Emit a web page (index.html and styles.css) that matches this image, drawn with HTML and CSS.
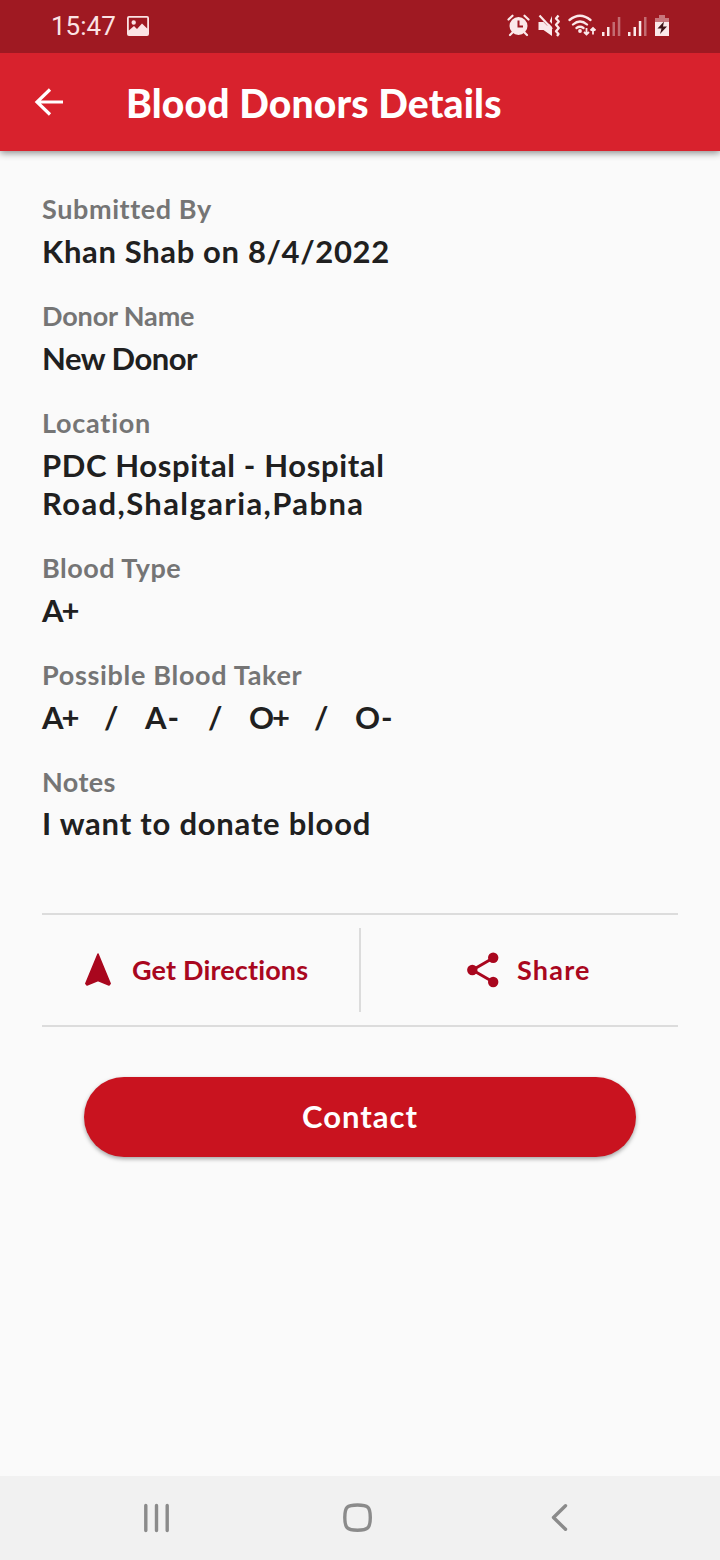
FILE: index.html
```html
<!DOCTYPE html>
<html lang="en">
<head>
<meta charset="utf-8">
<title>Blood Donors Details</title>
<link rel="stylesheet" href="styles.css">
</head>
<body>
<div class="screen">
  <div class="status">
    <span class="clock">15:47</span>
    <svg class="picture" width="22" height="20" viewBox="0 0 22 20"><path fill="#fbe3e4" fill-rule="evenodd" d="M2 0h18a2 2 0 0 1 2 2v16a2 2 0 0 1-2 2H2a2 2 0 0 1-2-2V2a2 2 0 0 1 2-2zM1.800 1.800V14.500L7 10l3 3 5-5.500 5.200 5V1.800zM6.700 4.300a2.200 2.200 0 1 1 0 4.400 2.200 2.200 0 0 1 0-4.400z"/></svg>
    <svg class="system" width="166" height="26" viewBox="506 13 166 26" fill="#fbe9ea" stroke="none">
      <circle cx="518.500" cy="26" r="9"/>
      <path d="M508.500 19.500l4-3.800M528.500 19.500l-4-3.800M513 32l-3 3M524 32l3 3" stroke="#fbe9ea" stroke-width="2.200" fill="none" stroke-linecap="round"/>
      <path d="M518.500 20.500V26.500H523" stroke="#9f1922" stroke-width="2" fill="none"/>
      <path d="M538.500 22h5l4 4 4.500-10v20l-8.500-6h-5z"/>
      <path d="M540.500 13.500L553.500 27" stroke="#9f1922" stroke-width="2.200"/>
      <path d="M539.500 15.500L552 29" stroke="#fbe9ea" stroke-width="2.200"/>
      <path d="M558.500 15.500l-2.500 3 2.800 3-2.800 3.300 2.800 3.200-2.800 3.300 2.500 2.700-1.500 2" stroke="#fbe9ea" stroke-width="2.300" fill="none" stroke-linejoin="round"/>
      <g stroke="#fbe9ea" stroke-width="2.300" fill="none" stroke-linecap="round"><path d="M569.500 20q10.500-8.500 21 0M573 24.500q7-6 14 0M576.500 28q3.500-2.500 7 0"/></g>
      <circle cx="580" cy="31" r="1.900"/>
      <path d="M586.500 28v6M584 32l2.500 2.500 2.500-2.500M593 34.500v-6M590.500 30.500L593 28l2.500 2.500" stroke="#fbe9ea" stroke-width="1.800" fill="none"/>
      <path d="M602 32h2.500v4H602zM607 27h2.500v9H607z"/>
      <path opacity=".4" d="M612.500 22h2.500v14h-2.500zM617.800 17h2.500v19h-2.500z"/>
      <path d="M628 32h2.500v4H628zM633.500 27h2.500v9h-2.500zM638.800 21h2.500v15h-2.500z"/>
      <path opacity=".4" d="M644 17h2.500v19H644z"/>
      <path opacity=".45" d="M659 15h6v3h4v5h-14v-5h4z"/>
      <path d="M655 22h14v14h-14z"/>
      <path fill="#3f1519" d="M664 21.500l-6.500 7h4l-1.500 5.500 7-7.500h-4z"/>
    </svg>
  </div>

  <header class="appbar">
    <svg class="back" width="30" height="30" viewBox="0 0 30 30"><path d="M16 2.500L3 15l13 12.500M3.500 15H29" fill="none" stroke="#fff" stroke-width="3.200"/></svg>
    <h1 class="title">Blood Donors Details</h1>
  </header>

  <main class="content">
    <dl class="details">
      <div class="item"><dt class="t1">Submitted By</dt><dd class="v1">Khan Shab on 8/4/2022</dd></div>
      <div class="item"><dt class="t2">Donor Name</dt><dd class="v2">New Donor</dd></div>
      <div class="item"><dt class="t3">Location</dt><dd><span class="v3">PDC Hospital - Hospital</span><br><span class="v4">Road,Shalgaria,Pabna</span></dd></div>
      <div class="item"><dt class="t4">Blood Type</dt><dd class="v5">A+</dd></div>
      <div class="item"><dt class="t5">Possible Blood Taker</dt><dd class="takers"><span class="ta">A+</span><span class="sl">/</span><span class="tb">A-</span><span class="sl">/</span><span class="tc">O+</span><span class="sl">/</span><span class="td">O-</span></dd></div>
      <div class="item"><dt class="t6">Notes</dt><dd class="v6">I want to donate blood</dd></div>
    </dl>

    <div class="actions">
      <div class="action directions">
        <svg width="28" height="34" viewBox="0 0 28 34"><path d="M14 1L26.200 30.500 25 32 14 27.500 3 32 1.800 30.500z" fill="#a9071e" stroke="#a9071e" stroke-width="1.500" stroke-linejoin="round"/></svg>
        <span class="a1">Get Directions</span>
      </div>
      <div class="divider"></div>
      <div class="action share">
        <svg width="32" height="36" viewBox="0 0 32 36"><path d="M26.200 6L5.500 18l20.700 12" fill="none" stroke="#a9071e" stroke-width="3"/><g fill="#a9071e"><circle cx="26.200" cy="5.800" r="5.200"/><circle cx="5.300" cy="18" r="5.200"/><circle cx="26.200" cy="30" r="5.200"/></g></svg>
        <span class="a2">Share</span>
      </div>
    </div>

    <button class="contact"><span>Contact</span></button>
  </main>

  <nav class="navbar">
    <svg width="720" height="84" viewBox="0 0 720 84" fill="none" stroke="#8b8b8b" stroke-width="3.400" stroke-linecap="round" stroke-linejoin="round">
      <path d="M145.800 29.500v25M156.500 29.500v25M167.200 29.500v25"/>
      <path d="M357.500 29c10.500 0 12.800 2 12.800 12.500S368 54.200 357.500 54.200 344.800 52 344.800 41.500 347 29 357.500 29z"/>
      <path d="M565.500 29.800L553.500 41.500l12 11.800"/>
    </svg>
  </nav>
</div>
</body>
</html>
```
FILE: styles.css
```css
* { box-sizing: border-box; }
body { margin: 0; background: #fafafa; font-family: Lato, sans-serif; font-weight: 700; font-variant-ligatures: none; }
.screen { width: 720px; height: 1560px; display: flex; flex-direction: column; overflow: hidden; }
.status { position: relative; z-index: 1; height: 53px; background: #9f1922; display: flex; align-items: center; padding: 0 48px 1px 51px; }
.clock { font: 400 26px/30px Roboto, sans-serif; color: #fbe3e4; width: 76px; white-space: nowrap; }
.system { margin-left: auto; }
.appbar { height: 98px; flex: none; background: #d8222d; display: flex; align-items: center; padding: 0 34px; box-shadow: 0 2px 7px rgba(0,0,0,.45); }
.title { margin: 2px 0 0 62px; font-size: 39px; line-height: 48px; font-weight: 900; letter-spacing: .18px; color: #fff; white-space: nowrap; }
.content { flex: 1; padding: 42px 42px 0; display: flex; flex-direction: column; }
.details { margin: 0; display: flex; flex-direction: column; gap: 30px; }
dt { font-size: 27px; line-height: 32px; color: #757575; white-space: nowrap; }
dd { margin: 7px 0 0; font-size: 31px; line-height: 38px; color: #202020; white-space: nowrap; }

/* Tracking per line */
.t1 { letter-spacing: .6px; }
.t2 { letter-spacing: -.15px; }
.t3 { letter-spacing: .75px; }
.t4 { letter-spacing: .5px; }
.t5 { letter-spacing: .68px; }
.t6 { letter-spacing: .4px; }
.v1 { letter-spacing: .65px; }
.v2 { letter-spacing: -.5px; }
.v3 { letter-spacing: .63px; }
.v4 { letter-spacing: 1.38px; }
.v5 { letter-spacing: -2px; }
.v6 { letter-spacing: .78px; margin-top: 6px; }
.a1 { letter-spacing: .15px; }
.a2 { letter-spacing: 1.2px; }

.takers { display: flex; }
.ta { width: 62px; letter-spacing: -2px; }
.sl { width: 41px; }
.tb { width: 63px; letter-spacing: 1px; }
.tc { width: 65px; letter-spacing: -2px; }
.td { letter-spacing: 1px; }
.actions { height: 114px; margin-top: 71px; border-top: 2px solid #dcdcdc; border-bottom: 2px solid #dcdcdc; display: flex; align-items: center; font-size: 27px; line-height: 32px; color: #a9071e; white-space: nowrap; }
.action { width: 317px; display: flex; align-items: center; }
.directions { padding-left: 42px; gap: 20px; }
.share { padding-left: 106px; gap: 18px; }
.divider { width: 2px; height: 84px; background: #dcdcdc; }
.contact { align-self: center; width: 552px; height: 80px; margin-top: 50px; padding: 0 0 2px; border: 0; border-radius: 40px; background: #c9131f; color: #fff; font: 700 31px/38px Lato, sans-serif; letter-spacing: 1px; box-shadow: 0 2px 4px rgba(0,0,0,.35); }
.navbar { height: 84px; flex: none; background: #f1f1f1; }
.navbar svg { display: block; }
```
